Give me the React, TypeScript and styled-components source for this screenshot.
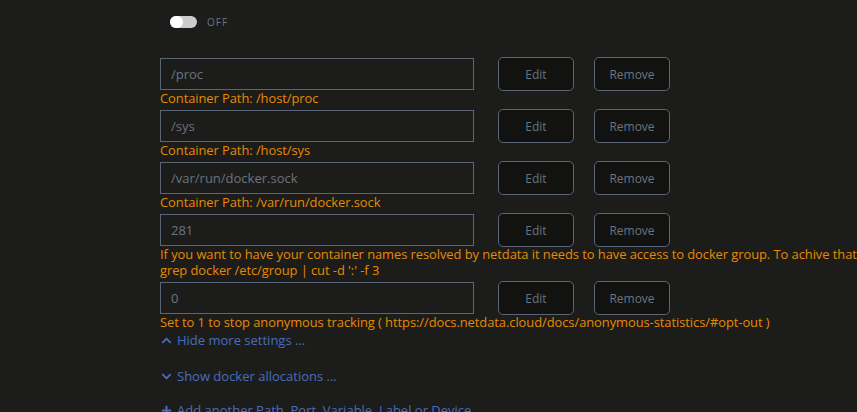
import styled, { createGlobalStyle } from "styled-components";
import { FaChevronUp, FaChevronDown, FaPlus } from "react-icons/fa";

interface ConfigEntry {
  value: string;
  description: string[];
}

const entries: ConfigEntry[] = [
  { value: "/proc", description: ["Container Path: /host/proc"] },
  { value: "/sys", description: ["Container Path: /host/sys"] },
  {
    value: "/var/run/docker.sock",
    description: ["Container Path: /var/run/docker.sock"],
  },
  {
    value: "281",
    description: [
      "If you want to have your container names resolved by netdata it needs to have access to docker group. To achive that just add the id of the docker group here. You can get it with:",
      "grep docker /etc/group | cut -d ':' -f 3",
    ],
  },
  {
    value: "0",
    description: [
      "Set to 1 to stop anonymous tracking ( https://docs.netdata.cloud/docs/anonymous-statistics/#opt-out )",
    ],
  },
];

export default function App() {
  return (
    <>
      <GlobalStyle />
      <Page>
        <ToggleRow>
          <Toggle>
            <Knob />
          </Toggle>
          <ToggleLabel>OFF</ToggleLabel>
        </ToggleRow>

        <Entries>
          {entries.map((entry) => (
            <Entry key={entry.value}>
              <FieldRow>
                <ValueInput value={entry.value} readOnly />
                <ActionButton>Edit</ActionButton>
                <ActionButton>Remove</ActionButton>
              </FieldRow>
              <Description>
                {entry.description.map((line) => (
                  <span key={line}>{line}</span>
                ))}
              </Description>
            </Entry>
          ))}
        </Entries>

        <LinkRow>
          <FaChevronUp size={11} />
          <span>Hide more settings ...</span>
        </LinkRow>
        <LinkRow $gap={20}>
          <FaChevronDown size={11} />
          <span>Show docker allocations ...</span>
        </LinkRow>
        <LinkRow $gap={18}>
          <FaPlus size={11} />
          <span>Add another Path, Port, Variable, Label or Device</span>
        </LinkRow>
      </Page>
    </>
  );
}

const GlobalStyle = createGlobalStyle`
  html, body {
    margin: 0;
    padding: 0;
    background: #1c1d1b;
    overflow: hidden;
  }
  body {
    font-family: "Open Sans", "Noto Sans", sans-serif;
  }
`;

const Page = styled.div`
  width: 857px;
  height: 412px;
  padding: 16px 0 0 160px;
  box-sizing: border-box;
  overflow: hidden;
`;

const ToggleRow = styled.div`
  display: flex;
  align-items: center;
  gap: 10px;
  padding-left: 10px;
  height: 12px;
`;

const Toggle = styled.div`
  width: 27px;
  height: 12px;
  border-radius: 6px;
  background: #cccccc;
  position: relative;
`;

const Knob = styled.div`
  position: absolute;
  left: 0;
  top: 0;
  width: 13px;
  height: 12px;
  border-radius: 6px;
  background: #ffffff;
`;

const ToggleLabel = styled.span`
  font-size: 10px;
  letter-spacing: 1px;
  color: #6c737e;
`;

const Entries = styled.div`
  display: flex;
  flex-direction: column;
  margin-top: 28px;
`;

const Entry = styled.div`
  display: flex;
  flex-direction: column;
`;

const FieldRow = styled.div`
  display: flex;
  align-items: center;
  height: 36px;
  gap: 20px;
`;

const ValueInput = styled.input`
  width: 314px;
  height: 32px;
  box-sizing: border-box;
  margin: 0 4px 0 0;
  padding: 0 10px;
  background: transparent;
  border: 1px solid #5b6575;
  border-radius: 0;
  font-family: inherit;
  font-size: 13px;
  color: #6c737e;
  outline: none;
`;

const ActionButton = styled.button`
  width: 76px;
  height: 34px;
  box-sizing: border-box;
  background: #121311;
  border: 1px solid #5b6575;
  border-radius: 5px;
  font-family: inherit;
  font-size: 12px;
  color: #6c737e;
  padding: 0;
`;

const Description = styled.div`
  display: flex;
  flex-direction: column;
  margin: -2px 0 2px;
  font-size: 12.9px;
  letter-spacing: -0.05px;
  line-height: 16px;
  color: #e68a00;
  white-space: nowrap;
`;

const LinkRow = styled.div<{ $gap?: number }>`
  display: flex;
  align-items: center;
  gap: 5px;
  margin-top: ${({ $gap }) => $gap ?? 0}px;
  height: 16px;
  font-size: 13px;
  color: #486dba;

  & > svg {
    margin-left: 1px;
  }
`;
